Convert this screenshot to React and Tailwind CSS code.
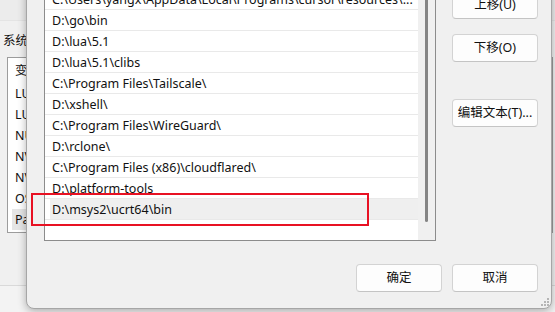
const rows = [
  "C:\\Users\\yangx\\AppData\\Local\\Programs\\cursor\\resources\\...",
  "D:\\go\\bin",
  "D:\\lua\\5.1",
  "D:\\lua\\5.1\\clibs",
  "C:\\Program Files\\Tailscale\\",
  "D:\\xshell\\",
  "C:\\Program Files\\WireGuard\\",
  "D:\\rclone\\",
  "C:\\Program Files (x86)\\cloudflared\\",
  "D:\\platform-tools",
  "D:\\msys2\\ucrt64\\bin",
];

const bgRows = ["LUA_DEV", "LUA_PATH", "NUMBER_OF_PROCESSORS", "NVM_HOME", "NVM_SYMLINK", "OS", "Path"];

function Btn({ children, className = "" }) {
  return (
    <div
      className={
        "flex h-[28px] w-[86px] items-center justify-center rounded-[4px] border border-[#d3d3d3] border-b-[#c4c4c4] bg-[#fdfdfd] pt-[1px] text-[12.5px] text-[#111] " +
        className
      }
    >
      {children}
    </div>
  );
}

export default function App() {
  return (
    <div className="relative h-[312px] w-[555px] overflow-hidden bg-[#f0f0f0] font-['Noto_Sans','Noto_Sans_CJK_SC',sans-serif] text-[12.5px] text-[#111]">
      {/* background window */}
      <div className="flex h-full flex-col">
        <div className="h-[21px] border-b border-[#e4e4e4] bg-[#ececec]" />
        <div className="w-[26px] overflow-hidden whitespace-nowrap pl-[3px] pt-[11px] leading-[17px]">系统变量(S)</div>
        <div className="ml-[7px] mt-[8px] h-[176px] w-[546px] border border-[#9c9c9c] bg-white">
          <div className="flex h-[25px] w-[19px] items-center overflow-hidden whitespace-nowrap pl-[7px] pt-[2px] leading-none">变量</div>
          {bgRows.map((r, i) => (
            <div
              key={r}
              className={
                "ml-[4px] flex h-[21px] w-[15px] items-center overflow-hidden whitespace-nowrap pl-[3px] pt-[2px] leading-none " +
                (i === bgRows.length - 1 ? "bg-[#e5e5e5]" : "")
              }
            >
              {r}
            </div>
          ))}
        </div>
        <div className="flex-1" />
        <div className="h-[27px] border-t border-[#d9d9d9] bg-[#f3f3f3]" />
      </div>

      {/* dialog */}
      <div className="absolute left-[26px] top-[-41px] flex h-[350px] w-[526px] flex-col rounded-b-[8px] border border-[#a6a6a6] bg-[#f0f0f0] pl-[17px] pr-[13px] pt-[28px] shadow-[0_2px_8px_rgba(0,0,0,0.3)]">
        <div className="flex">
          <div className="flex h-[253px] w-[392px] border border-[#8c8c8c] bg-white">
            <div className="flex w-[373px] flex-col">
              {rows.map((r, i) => (
                <div key={i} className="h-[21px] shrink-0 border-b border-[#e9e9e9]">
                  <div
                    className={
                      "ml-[5px] flex h-[20px] items-center overflow-hidden whitespace-nowrap pl-[2px] pt-[3px] leading-none " +
                      (i === rows.length - 1 ? "bg-[#efefef]" : "")
                    }
                  >
                    {r}
                  </div>
                </div>
              ))}
            </div>
            <div className="flex w-[17px] bg-[#f0f0f0] pl-[7px]">
              <div className="h-[233px] w-[3px] rounded-b-full bg-[#858585]" />
            </div>
          </div>
          <div className="ml-[16px] flex flex-col pt-[3px]">
            <Btn>上移(U)</Btn>
            <Btn className="mt-[15px]">下移(O)</Btn>
            <Btn className="mt-[37px]">编辑文本(T)...</Btn>
          </div>
        </div>
        <div className="mt-[23px] flex justify-end gap-[10px]">
          <Btn>确定</Btn>
          <Btn>取消</Btn>
        </div>
        <svg className="absolute bottom-[2px] right-[2px]" width="8" height="8" viewBox="0 0 8 8">
          <rect x="6" y="0" width="2" height="2" fill="#b5b5b5" />
          <rect x="3" y="3" width="2" height="2" fill="#b5b5b5" />
          <rect x="6" y="3" width="2" height="2" fill="#b5b5b5" />
          <rect x="0" y="6" width="2" height="2" fill="#b5b5b5" />
          <rect x="3" y="6" width="2" height="2" fill="#b5b5b5" />
          <rect x="6" y="6" width="2" height="2" fill="#b5b5b5" />
        </svg>
      </div>

      {/* red annotation */}
      <div className="absolute left-[31px] top-[193px] h-[33px] w-[338px] border-2 border-[#e81123]" />
    </div>
  );
}
